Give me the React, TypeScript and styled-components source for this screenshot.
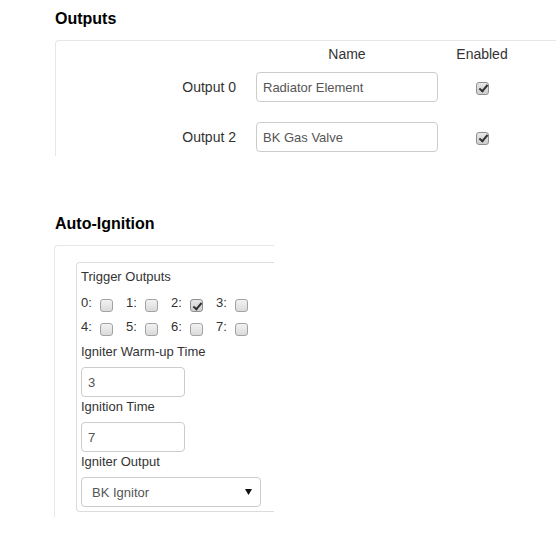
import React from "react";
import styled, { createGlobalStyle } from "styled-components";

const GlobalStyle = createGlobalStyle`
  html, body { margin: 0; padding: 0; background: #fff; }
  body { font-family: "Liberation Sans", Arial, sans-serif; color: #333; }
  * { box-sizing: border-box; }
`;

const Page = styled.div`
  width: 556px;
  padding-left: 55px;
`;

const Heading = styled.h3<{ $top: number }>`
  margin: ${(p) => p.$top}px 0 11px 0;
  font-size: 16px;
  line-height: 20px;
  font-weight: bold;
  color: #000;
`;

const OutputsPanel = styled.div`
  border-top: 1px solid #e6e6e6;
  border-left: 1px solid #e6e6e6;
  border-top-left-radius: 4px;
  padding: 3px 0 4px 0;
`;

const TableRow = styled.div<{ $header?: boolean }>`
  display: grid;
  grid-template-columns: 200px 182px 88px;
  align-items: center;
  height: ${(p) => (p.$header ? 20 : 30)}px;
  margin-bottom: ${(p) => (p.$header ? 8 : 0)}px;
`;

const Rows = styled.div`
  display: flex;
  flex-direction: column;
  gap: 20px;
`;

const HeadCell = styled.div`
  font-size: 14px;
  line-height: 20px;
  text-align: center;
  color: #333;
`;

const RowLabel = styled.label`
  font-size: 14px;
  text-align: right;
  padding-right: 20px;
  color: #333;
`;

const CheckCell = styled.div`
  display: flex;
  justify-content: center;
  align-items: center;
  padding-left: 1px;
  padding-top: 2px;
`;

const TextInput = styled.input<{ $width: number }>`
  width: ${(p) => p.$width}px;
  height: 30px;
  border: 1px solid #ccc;
  border-radius: 4px;
  padding: 0 6px;
  font-family: "Liberation Sans", Arial, sans-serif;
  font-size: 13px;
  color: #555;
  background: #fff;
  outline: none;
`;

const Check = styled.input.attrs({ type: "checkbox" })`
  appearance: none;
  -webkit-appearance: none;
  width: 13px;
  height: 13px;
  margin: 0;
  border: 1px solid #a3a3a3;
  border-radius: 3px;
  background: linear-gradient(#f2f2f2, #dadada);
  position: relative;
  flex: none;
  &:checked {
    background: linear-gradient(#e6e6e6, #cfcfcf);
    border-color: #8f8f8f;
  }
  &:checked::after {
    content: "";
    position: absolute;
    left: 3.5px;
    top: 0.5px;
    width: 3px;
    height: 7px;
    border-right: 2px solid #333;
    border-bottom: 2px solid #333;
    transform: rotate(40deg);
  }
`;

const AutoPanel = styled.div`
  width: 220px;
  margin-left: -1px;
  border-top: 1px solid #e6e6e6;
  border-left: 1px solid #e6e6e6;
  border-top-left-radius: 4px;
  padding: 16px 0 5px 21px;
`;

const Well = styled.div`
  border-top: 1px solid #dcdcdc;
  border-left: 1px solid #dcdcdc;
  border-bottom: 1px solid #dcdcdc;
  border-top-left-radius: 4px;
  border-bottom-left-radius: 4px;
  padding: 4px 0 4px 4px;
`;

const FieldLabel = styled.div<{ $gap?: number }>`
  font-size: 13px;
  line-height: 20px;
  color: #333;
  margin-top: ${(p) => p.$gap ?? 0}px;
  margin-bottom: 5px;
`;

const TriggerGrid = styled.div`
  display: grid;
  grid-template-columns: repeat(4, 45px);
  grid-auto-rows: 24px;
  margin-top: 6px;
  margin-bottom: 1px;
`;

const TriggerItem = styled.label`
  display: flex;
  align-items: center;
  font-size: 13px;
  color: #333;
  & > span {
    width: 19px;
    margin-top: -5px;
  }
  & > input {
    margin-top: 1px;
  }
`;

const SelectWrap = styled.div`
  position: relative;
  width: 180px;
  height: 30px;
`;

const Select = styled.select`
  appearance: none;
  -webkit-appearance: none;
  width: 100%;
  height: 30px;
  border: 1px solid #ccc;
  border-radius: 4px;
  padding: 0 20px 0 10px;
  font-family: "Liberation Sans", Arial, sans-serif;
  font-size: 13px;
  color: #555;
  background: #fff;
  outline: none;
`;

const Arrow = styled.svg`
  position: absolute;
  right: 9px;
  top: 12px;
  pointer-events: none;
`;

const outputs = [
  { label: "Output 0", name: "Radiator Element" },
  { label: "Output 2", name: "BK Gas Valve" },
];

const triggers = [
  { n: 0, on: false },
  { n: 1, on: false },
  { n: 2, on: true },
  { n: 3, on: false },
  { n: 4, on: false },
  { n: 5, on: false },
  { n: 6, on: false },
  { n: 7, on: false },
];

export default function App() {
  return (
    <>
      <GlobalStyle />
      <Page>
        <Heading $top={9}>Outputs</Heading>
        <OutputsPanel>
          <TableRow $header>
            <div />
            <HeadCell>Name</HeadCell>
            <HeadCell>Enabled</HeadCell>
          </TableRow>
          <Rows>
            {outputs.map((o) => (
              <TableRow key={o.label}>
                <RowLabel>{o.label}</RowLabel>
                <TextInput $width={182} defaultValue={o.name} />
                <CheckCell>
                  <Check defaultChecked />
                </CheckCell>
              </TableRow>
            ))}
          </Rows>
        </OutputsPanel>

        <Heading $top={58}>Auto-Ignition</Heading>
        <AutoPanel>
          <Well>
            <FieldLabel style={{ marginBottom: 0 }}>Trigger Outputs</FieldLabel>
            <TriggerGrid>
              {triggers.map((t) => (
                <TriggerItem key={t.n}>
                  <span>{t.n}:</span>
                  <Check defaultChecked={t.on} />
                </TriggerItem>
              ))}
            </TriggerGrid>
            <FieldLabel>Igniter Warm-up Time</FieldLabel>
            <TextInput $width={104} defaultValue="3" />
            <FieldLabel>Ignition Time</FieldLabel>
            <TextInput $width={104} defaultValue="7" />
            <FieldLabel>Igniter Output</FieldLabel>
            <SelectWrap>
              <Select defaultValue="bk">
                <option value="bk">BK Ignitor</option>
              </Select>
              <Arrow width="7" height="6" viewBox="0 0 7 6">
                <polygon points="0,0 7,0 3.5,6" fill="#111" />
              </Arrow>
            </SelectWrap>
          </Well>
        </AutoPanel>
      </Page>
    </>
  );
}
